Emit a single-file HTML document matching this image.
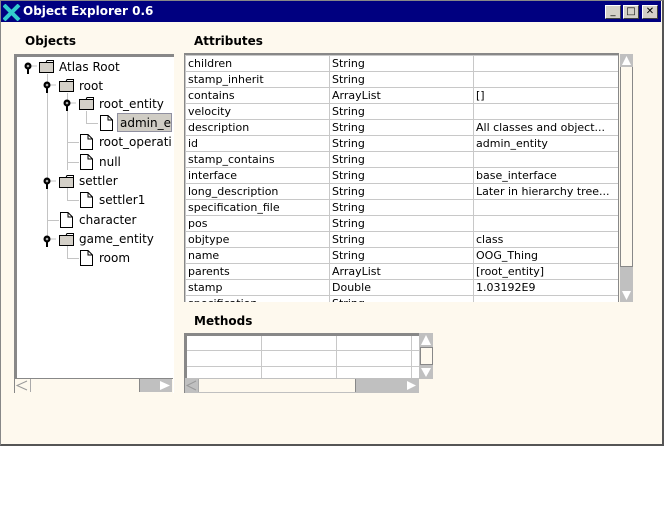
<!DOCTYPE html>
<html><head><style>
*{margin:0;padding:0;box-sizing:border-box}
body{width:664px;height:512px;background:#fff;position:relative;overflow:hidden;font-family:"DejaVu Sans","Liberation Sans",sans-serif;font-size:11px;color:#000}
.a{position:absolute}
#win{left:0;top:0;width:664px;height:446px;background:#fef9ee;border:1px solid #888;border-right:2px solid #555;border-bottom:2px solid #555}
#title{left:1px;top:1px;width:660px;height:21px;background:#000080;color:#fff;font-weight:bold;font-size:12px;line-height:21px;padding-left:22px}
.btn{top:5px;width:16px;height:14px;background:#d4d0c8;border:1px solid;border-color:#fff #404040 #404040 #fff;font-size:10px;line-height:12px;text-align:center;color:#000}
.lbl{font-weight:bold;font-size:12px}
table{border-collapse:collapse}
td{border:1px solid #c8c8c8;height:16px;padding:0 2px;white-space:nowrap;overflow:hidden;font-size:11px;line-height:14px}
.tr{position:absolute;white-space:nowrap;font-size:12px}
.ln{position:absolute;background:#c4c4c4}
</style></head><body>
<div id="win" class="a"></div>
<div id="title" class="a">Object Explorer 0.6</div>
<svg class="a" style="left:3px;top:4px" width="18" height="17"><path d="M1 1 L16 16 M16 1 L1 16" stroke="#3cc" stroke-width="4"/></svg>
<div class="a btn" style="left:605px">_</div>
<div class="a btn" style="left:623px">□</div>
<div class="a btn" style="left:642px;font-weight:bold">✕</div>

<div class="a lbl" style="left:25px;top:34px">Objects</div>
<div class="a lbl" style="left:194px;top:34px">Attributes</div>
<div class="a lbl" style="left:194px;top:314px">Methods</div>

<!-- tree -->
<div class="a" style="left:14px;top:54px;width:160px;height:339px;border:3px solid #888;border-right:none;border-bottom:none;background:#fff"></div>
<div class="a" style="left:14px;top:378px;width:159px;height:15px;background:#fef9ee;border-top:1px solid #888;border-left:1px solid #888"></div>
<div class="a" style="left:30px;top:379px;width:110px;height:13px;border-right:1px solid #888;border-left:1px solid #aaa;background:#fef9ee"></div>
<div class="a" style="left:140px;top:379px;width:18px;height:13px;background:#c0c0c0"></div>
<div class="a" style="left:158px;top:379px;width:14px;height:13px;background:#c0c0c0"></div>
<svg class="a" style="left:15px;top:379px" width="14" height="13"><path d="M12 2 L2 6.5 L12 11" fill="none" stroke="#999"/></svg>
<svg class="a" style="left:158px;top:379px" width="14" height="13"><path d="M2 2 L12 6.5 L2 11Z" fill="#fff"/></svg>

<div class="ln" style="left:47px;top:74px;width:1px;height:172px"></div>
<div class="ln" style="left:67px;top:93px;width:1px;height:77px"></div>
<div class="ln" style="left:86px;top:111px;width:1px;height:12px"></div>
<div class="ln" style="left:86px;top:123px;width:12px;height:1px"></div>
<div class="ln" style="left:67px;top:142px;width:12px;height:1px"></div>
<div class="ln" style="left:67px;top:162px;width:12px;height:1px"></div>
<div class="ln" style="left:67px;top:188px;width:1px;height:12px"></div>
<div class="ln" style="left:67px;top:200px;width:12px;height:1px"></div>
<div class="ln" style="left:47px;top:220px;width:12px;height:1px"></div>
<div class="ln" style="left:67px;top:246px;width:1px;height:12px"></div>
<div class="ln" style="left:67px;top:258px;width:12px;height:1px"></div>
<svg class="a" style="left:0;top:0" width="180" height="280">
<defs>
<g id="h"><line x1="0" y1="0" x2="9" y2="0" stroke="#c4c4c4"/><circle cx="0" cy="0" r="3.5" fill="#000"/><circle cx="0" cy="0" r="1.3" fill="#aaa"/><line x1="0" y1="3" x2="0" y2="8" stroke="#000" stroke-width="2"/></g>
<g id="f"><path d="M0.5 2.5 H14.5 V12.5 H0.5Z" fill="#d4d0c8" stroke="#000"/><path d="M8 0.5 H14.5 V2.5 H7Z" fill="#fff" stroke="#000"/></g>
<g id="d"><path d="M0.5 0.5 H8 L12.5 5 V15.5 H0.5Z" fill="#fff" stroke="#000"/><path d="M8 0.5 V5 H12.5" fill="none" stroke="#000"/></g>
</defs>
<use href="#h" x="28" y="66"/><use href="#f" x="39" y="60"/>
<use href="#h" x="47" y="85"/><use href="#f" x="59" y="79"/>
<use href="#h" x="67" y="103"/><use href="#f" x="79" y="97"/>
<use href="#d" x="100" y="115"/>
<use href="#d" x="80" y="134"/>
<use href="#d" x="80" y="154"/>
<use href="#h" x="47" y="181"/><use href="#f" x="59" y="175"/>
<use href="#d" x="80" y="192"/>
<use href="#d" x="60" y="212"/>
<use href="#h" x="47" y="239"/><use href="#f" x="59" y="233"/>
<use href="#d" x="80" y="250"/>
</svg>
<div class="tr" style="left:59px;top:60px">Atlas Root</div>
<div class="tr" style="left:79px;top:79px">root</div>
<div class="tr" style="left:99px;top:97px">root_entity</div>
<div class="a" style="left:117px;top:113px;width:55px;height:19px;background:#d0cdc5;border:1px solid #9090a0"></div>
<div class="tr" style="left:120px;top:116px;width:52px;overflow:hidden">admin_entity</div>
<div class="tr" style="left:99px;top:135px;width:73px;overflow:hidden">root_operation</div>
<div class="tr" style="left:99px;top:155px">null</div>
<div class="tr" style="left:79px;top:174px">settler</div>
<div class="tr" style="left:99px;top:193px">settler1</div>
<div class="tr" style="left:79px;top:213px">character</div>
<div class="tr" style="left:79px;top:232px">game_entity</div>
<div class="tr" style="left:99px;top:251px">room</div>

<!-- attributes -->
<div class="a" style="left:184px;top:53px;width:435px;height:249px;border-top:2px solid #888;border-left:1px solid #888;background:#fff;overflow:hidden">
<table style="width:434px;table-layout:fixed">
<col style="width:144px"><col style="width:144px"><col style="width:146px">
<tr><td>children</td><td>String</td><td></td></tr>
<tr><td>stamp_inherit</td><td>String</td><td></td></tr>
<tr><td>contains</td><td>ArrayList</td><td>[]</td></tr>
<tr><td>velocity</td><td>String</td><td></td></tr>
<tr><td>description</td><td>String</td><td>All classes and object...</td></tr>
<tr><td>id</td><td>String</td><td>admin_entity</td></tr>
<tr><td>stamp_contains</td><td>String</td><td></td></tr>
<tr><td>interface</td><td>String</td><td>base_interface</td></tr>
<tr><td>long_description</td><td>String</td><td>Later in hierarchy tree...</td></tr>
<tr><td>specification_file</td><td>String</td><td></td></tr>
<tr><td>pos</td><td>String</td><td></td></tr>
<tr><td>objtype</td><td>String</td><td>class</td></tr>
<tr><td>name</td><td>String</td><td>OOG_Thing</td></tr>
<tr><td>parents</td><td>ArrayList</td><td>[root_entity]</td></tr>
<tr><td>stamp</td><td>Double</td><td>1.03192E9</td></tr>
<tr><td>specification</td><td>String</td><td></td></tr>
</table></div>
<div class="a" style="left:618px;top:53px;width:16px;height:249px;background:#fef9ee;border-left:1px solid #888"></div>
<div class="a" style="left:620px;top:54px;width:13px;height:13px;background:#c0c0c0"></div>
<svg class="a" style="left:620px;top:54px" width="13" height="13"><path d="M6.5 2 L11 11 H2Z" fill="#fff"/></svg>
<div class="a" style="left:620px;top:67px;width:13px;height:200px;border:1px solid #888;border-top:none;background:#fef9ee"></div>
<div class="a" style="left:620px;top:267px;width:13px;height:35px;background:#c0c0c0"></div>
<svg class="a" style="left:620px;top:289px" width="13" height="13"><path d="M2 2 H11 L6.5 11Z" fill="#fff"/></svg>

<!-- methods -->
<div class="a" style="left:184px;top:333px;width:235px;height:46px;border-top:3px solid #888;border-left:3px solid #888;background:#fff;overflow:hidden">
<div class="a" style="left:0;top:14px;width:235px;height:1px;background:#c8c8c8"></div>
<div class="a" style="left:0;top:30px;width:235px;height:1px;background:#c8c8c8"></div>
<div class="a" style="left:74px;top:0;width:1px;height:46px;background:#c8c8c8"></div>
<div class="a" style="left:149px;top:0;width:1px;height:46px;background:#c8c8c8"></div>
<div class="a" style="left:224px;top:0;width:1px;height:46px;background:#c8c8c8"></div>
</div>
<div class="a" style="left:419px;top:333px;width:14px;height:46px;background:#c0c0c0"></div>
<div class="a" style="left:420px;top:347px;width:13px;height:18px;background:#fef9ee;border:1px solid #888"></div>
<svg class="a" style="left:419px;top:333px" width="14" height="46"><path d="M7 2 L12 12 H2Z M2 35 H12 L7 44Z" fill="#fff"/></svg>
<div class="a" style="left:184px;top:378px;width:235px;height:15px;background:#c0c0c0;border-left:1px solid #888"></div>
<div class="a" style="left:198px;top:379px;width:158px;height:13px;background:#fef9ee;border-right:1px solid #888;border-left:1px solid #aaa"></div>
<svg class="a" style="left:185px;top:379px" width="13" height="13"><path d="M11 2 L2 6.5 L11 11" fill="none" stroke="#999"/></svg>
<svg class="a" style="left:405px;top:379px" width="13" height="13"><path d="M2 2 L11 6.5 L2 11Z" fill="#fff"/></svg>
</body></html>
